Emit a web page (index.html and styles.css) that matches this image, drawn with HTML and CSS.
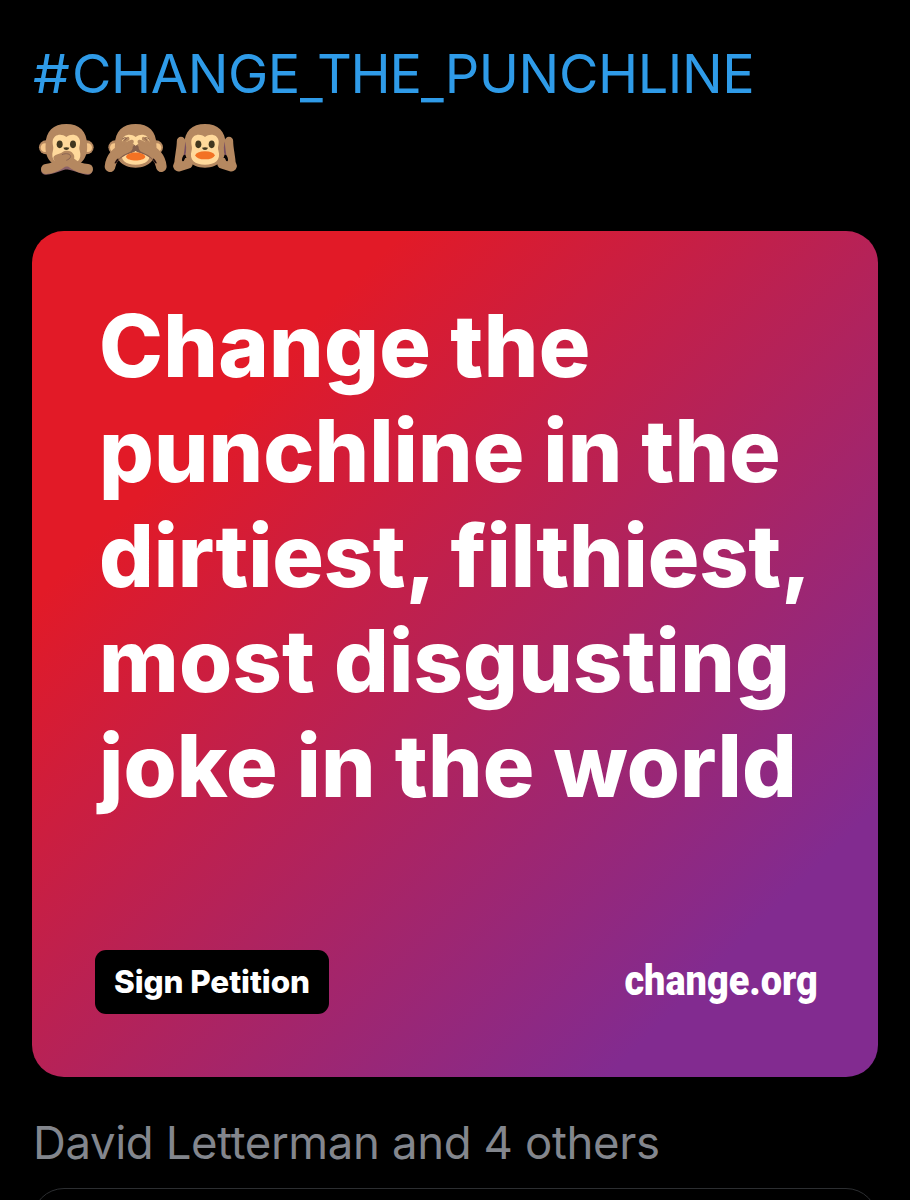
FILE: index.html
```html
<!DOCTYPE html>
<html lang="en">
<head>
<meta charset="utf-8">
<title>Change the punchline</title>
<link rel="stylesheet" href="styles.css">
</head>
<body>
<main class="post">
  <div class="hashtag"><span class="hash">#</span>CHANGE<span class="underscore first">_</span><span class="the">THE</span><span class="underscore">_</span>PUNCHLINE</div>
  <svg class="monkeys" viewBox="0 0 645 195" role="img" aria-label="Three monkeys">
    <defs>
      <g id="head">
        <circle cx="-61" cy="97" r="21" fill="#b58860"/><circle cx="61" cy="97" r="21" fill="#b58860"/>
        <circle cx="-64" cy="98" r="13" fill="#f6c78b"/><circle cx="64" cy="98" r="13" fill="#f6c78b"/>
        <path d="M-62 88C-62 49-39 27 0 27S62 49 62 88C66 131 42 158 0 158S-66 131-62 88Z" fill="#b58860"/>
        <path d="M0 66C-14 54-38 57-41 78C-42 91-37 96-40 106C-49 137-30 149 0 149S49 137 40 106C37 96 42 91 41 78C38 57 14 54 0 66Z" fill="#ffd99b"/>
      </g>
      <g id="eyes" fill="#42381f">
        <ellipse cx="-20" cy="88" rx="9" ry="11.500"/><ellipse cx="20" cy="88" rx="9" ry="11.500"/>
        <path d="M-9 98Q0 95 9 98Q7 105 0 105T-9 98Z"/>
      </g>
    </defs>
    <g transform="translate(109 0)">
      <use href="#head"/><use href="#eyes"/>
      <path d="M-62 166C-38 164-20 155-4 149C20 148 40 163 65 166" fill="none" stroke="#8a6068" stroke-width="27" stroke-linecap="round"/>
      <path d="M-61 162C-38 160-22 151-6 138M65 162C42 161 26 153 12 141" fill="none" stroke="#b58860" stroke-width="30" stroke-linecap="round"/>
      <path d="M-39 129C-37 117-21 119-12 112C-2 104 16 107 20 116C28 122 23 144 10 152C-8 160-36 148-39 129Z" fill="#b58860"/>
      <path d="M-13 119C0 113 12 117 13 124C12 131 5 134 0 136" fill="none" stroke="#8a6453" stroke-width="3"/>
    </g>
    <g transform="translate(317 0)">
      <use href="#head"/>
      <path d="M-9 98Q0 95 9 98Q7 107 0 107T-9 98Z" fill="#42381f"/>
      <g id="cover">
        <path d="M-76 158C-66 124-46 111-10 100" fill="none" stroke="#855f4c" stroke-width="25" stroke-linecap="round"/>
        <path d="M-77 155C-74 124-52 107-25 97" fill="none" stroke="#b58860" stroke-width="32" stroke-linecap="round"/>
        <path d="M-38 85Q-31 73-24 71M-28 89Q-19 79-11 80M-22 97L-11 90" fill="none" stroke="#b58860" stroke-width="11" stroke-linecap="round"/>
        <path d="M-41 73Q-31 64-27 70L-34 76" fill="none" stroke="#855f4c" stroke-width="3"/>
        <ellipse cx="-57" cy="138" rx="3" ry="9" transform="rotate(34 -57 138)" fill="#1d0d0d"/>
      </g>
      <use href="#cover" transform="scale(-1 1)"/>
      <path d="M-29 126C-27 108 27 108 29 126C24 140-24 140-29 126Z" fill="#f37224"/>
    </g>
    <g transform="translate(525 0)">
      <use href="#head"/><use href="#eyes"/>
      <ellipse cx="0" cy="121" rx="29" ry="12" fill="#f37224"/>
      <g id="earArm">
        <path d="M-70 77C-63 92-63 104-68 120" fill="none" stroke="#795063" stroke-width="17" stroke-linecap="round"/>
        <path d="M-72 78C-72 101-78 119-80 149" fill="none" stroke="#b58860" stroke-width="25" stroke-linecap="round"/>
        <path d="M-79 153L-53 145" stroke="#b58860" stroke-width="33" stroke-linecap="round"/>
        <ellipse cx="-64" cy="129" rx="4" ry="10" transform="rotate(18 -64 129)" fill="#070405"/>
      </g>
      <use href="#earArm" transform="scale(-1 1)"/>
    </g>
  </svg>
  <section class="card">
    <h1 class="headline">
      <span class="l1">Change the</span>
      <span class="l2">punchline in the</span>
      <span class="l3">dirtiest, filthiest,</span>
      <span class="l4">most disgusting</span>
      <span class="l5">joke in the world</span>
    </h1>
    <div class="footer">
      <a class="sign"><span>Sign Petition</span></a>
      <div class="brand">change.org</div>
    </div>
  </section>
  <div class="likes">David Letterman and 4 others</div>
  <div class="next"></div>
</main>
</body>
</html>
```
FILE: styles.css
```css
* { box-sizing: border-box; }
body { margin: 0; background: #000; font-family: Inter, sans-serif; }
.post { height: 1200px; padding: 40px 32px 0; overflow: hidden; display: flex; flex-direction: column; }
.hashtag { flex: none; height: 75px; line-height: 68px; font-size: 54px; font-weight: 400; letter-spacing: -0.4px; color: #2f9be8; white-space: nowrap; padding-left: 1px; }
.hash { display: inline-block; width: 39px; transform: scaleX(1.08); transform-origin: left; }
.the { letter-spacing: -1.2px; }
.underscore { display: inline-block; width: 24px; transform: translateY(5px) scaleX(.92); transform-origin: left; }
.underscore.first { width: 18px; margin-right: -1px; }
.monkeys { display: block; width: 215px; height: 65px; margin-left: -2px; flex: none; }
.card {
  flex: none; margin-top: 51px; width: 846px; height: 846px; border-radius: 32px;
  padding: 63px 60px 63px 67px; display: flex; flex-direction: column; justify-content: space-between;
  background: linear-gradient(135deg, #e21a27 0%, #e21a27 22%, #822b90 84%, #822b90 100%);
}
.headline { margin: 0; color: #fff; font-size: 86px; line-height: 105px; font-weight: 800; }
.headline span { display: block; white-space: nowrap; }
.l1 { letter-spacing: 0.3px; }
.l2 { letter-spacing: 0.05px; }
.l3 { letter-spacing: -0.2px; }
.l4 { letter-spacing: 0.2px; }
.l5 { letter-spacing: 0.1px; }
.footer { display: flex; justify-content: space-between; margin-left: -4px; height: 64px; }
.sign { width: 234px; height: 64px; border-radius: 11px; background: #000; color: #fff; font-size: 31.5px; line-height: 64px; font-weight: 800; text-align: center; white-space: nowrap; letter-spacing: -0.1px; }
.brand { color: #fff; font-family: Roboto, sans-serif; font-size: 42px; font-weight: 900; line-height: 61px; white-space: nowrap; transform: scaleX(.9); transform-origin: right; }
.likes { flex: none; height: 70px; margin-top: 30px; padding-left: 1px; line-height: 72px; font-size: 45.5px; font-weight: 400; letter-spacing: -0.37px; color: #83868d; white-space: nowrap; }
.next { flex: none; margin-top: 11px; height: 80px; border: 1px solid #2c2e31; border-radius: 32px; }
```
